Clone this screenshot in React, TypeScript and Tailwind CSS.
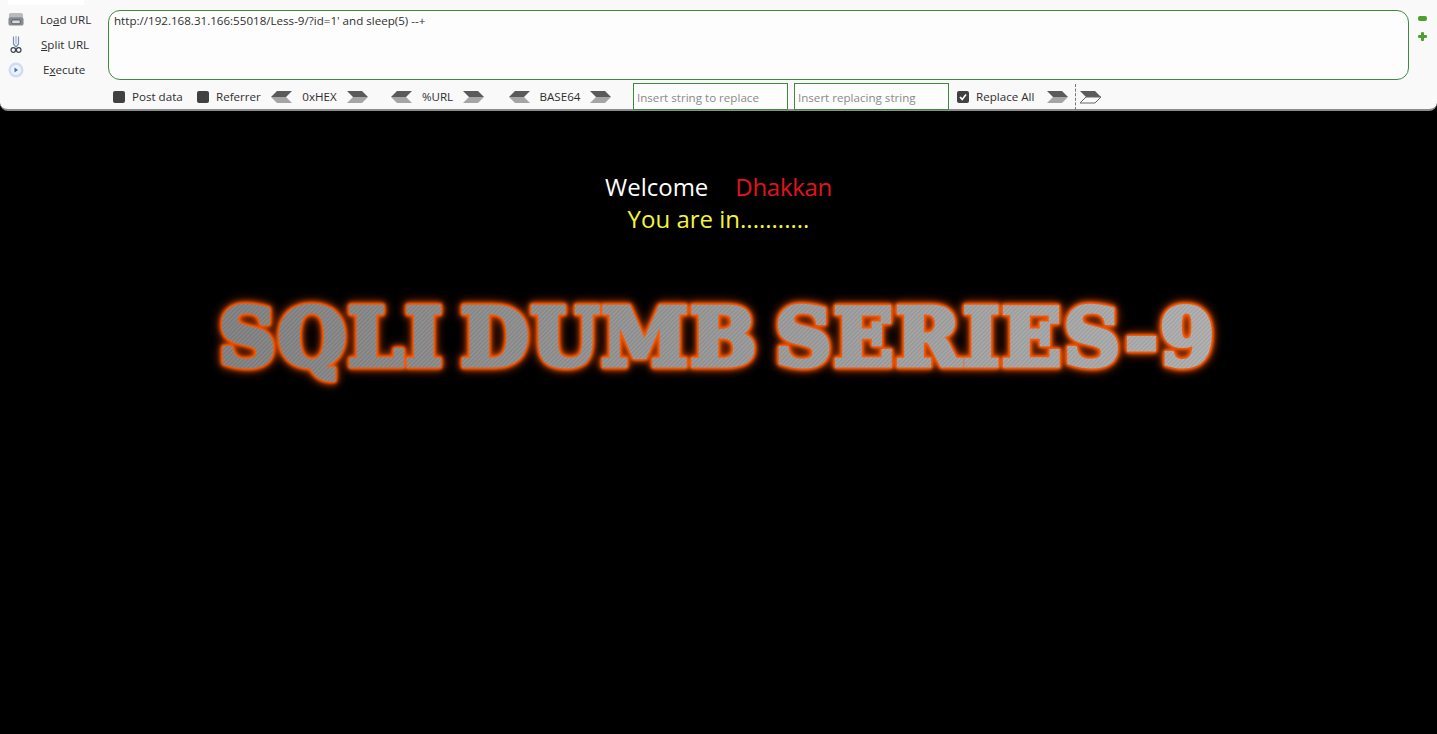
const uiFont = "font-['Open_Sans','Noto_Sans',sans-serif]";

function Chevron({ dir, hollow }: { dir: "left" | "right"; hollow?: boolean }) {
  return (
    <svg width="23" height="14" viewBox="0 0 23 14" className={dir === "left" ? "-scale-x-100" : ""}>
      <path d="M1 1h15l6 6H7z" fill={hollow ? "#5c5c5c" : "#5a5a5a"} />
      <path d="M7 7h15l-6 6H1z" fill={hollow ? "#fafafa" : "#a5a5a5"} stroke={hollow ? "#666" : "none"} />
    </svg>
  );
}

function Check({ label, on, className }: { label: string; on?: boolean; className: string }) {
  return (
    <div className={`flex items-center gap-[7px] ${className}`}>
      <span className="w-3 h-3 rounded-[2px] bg-[#414141] flex items-center justify-center">
        {on && (
          <svg width="10" height="10" viewBox="0 0 10 10" fill="none" stroke="#fff" strokeWidth="1.6">
            <path d="M2 5l2.2 2.4L8 2.6" />
          </svg>
        )}
      </span>
      <span>{label}</span>
    </div>
  );
}

function Encoder({ label, className, textWidth }: { label: string; className: string; textWidth: string }) {
  return (
    <div className={`flex items-center ${className}`}>
      <Chevron dir="left" />
      <span className={`${textWidth} text-center`}>{label}</span>
      <Chevron dir="right" />
    </div>
  );
}

function SideButton({ icon, children, pad }: { icon: React.ReactNode; children: React.ReactNode; pad: string }) {
  return (
    <div className="flex items-center h-[25px] shrink-0">
      <span className="w-4 h-5 flex items-center justify-center">{icon}</span>
      <span className={pad}>{children}</span>
    </div>
  );
}

export default function App() {
  return (
    <div className="min-h-[734px] bg-black overflow-hidden">
      {/* hackbar panel */}
      <div className={`h-[111px] bg-[#f9f9f9] rounded-b-[8px] border-b-2 border-[#8c8c8c] text-[11.6px] leading-4 text-[#2f2f2f] ${uiFont}`}>
        <div className="ml-2 w-[76px] h-[5px] bg-white" />
        <div className="flex pl-2 mt-[5px] h-[70px]">
          <div className="w-[100px] flex flex-col -mt-[3px]">
            <SideButton
              pad="ml-4"
              icon={
                <svg width="17" height="15" viewBox="0 0 17 15">
                  <rect x="1" y="0.5" width="15" height="6" rx="2" fill="#b8bcc0" />
                  <rect x="0.5" y="5" width="16" height="9" rx="2" fill="#858b90" />
                  <rect x="4" y="8" width="9" height="4" rx="1" fill="#d8dadc" stroke="#444" strokeWidth="0.8" />
                </svg>
              }
            >
              Lo<span className="underline">a</span>d URL
            </SideButton>
            <SideButton
              pad="ml-[17px]"
              icon={
                <svg width="12" height="19" viewBox="0 0 12 19" fill="none" stroke="#3c4450" strokeWidth="1.2">
                  <path d="M3.500 1.500v7.500l2.500 3M8.500 1.500v7.500l-2.500 3" stroke="#7a8fb0" />
                  <path d="M6 1v8" stroke="#9db0cc" />
                  <circle cx="3.300" cy="15" r="2.300" />
                  <circle cx="8.700" cy="15" r="2.300" />
                </svg>
              }
            >
              <span className="underline">S</span>plit URL
            </SideButton>
            <SideButton
              pad="ml-[19px]"
              icon={
                <svg width="16" height="16" viewBox="0 0 16 16">
                  <circle cx="8" cy="8" r="7.500" fill="#cfdcf2" />
                  <circle cx="8" cy="8" r="5" fill="#eef3fb" />
                  <path d="M6.500 5.500l3.500 2.500-3.500 2.500z" fill="#4d74a8" />
                </svg>
              }
            >
              E<span className="underline">x</span>ecute
            </SideButton>
          </div>
          <div className="w-[1301px] h-[70px] rounded-[12px] border border-[#3f8a3f] bg-[#fdfdfd] px-[5px] py-[2px] leading-[16px]">
            http://192.168.31.166:55018/Less-9/?id=1' and sleep(5) --+
          </div>
          <div className="ml-[9px] flex flex-col items-center gap-[11px] pt-[6px] w-[9px]">
            <span className="w-[9px] h-[5px] rounded-[2px] bg-[#4f9f2f]" />
            <svg width="9" height="9" viewBox="0 0 9 9">
              <path d="M3 0.500Q4.500-0.500 6 0.500V3h2.500Q9.500 4.500 8.500 6H6v2.500Q4.500 9.500 3 8.500V6H0.500Q-0.500 4.500 0.500 3H3z" fill="#4f9f2f" />
            </svg>
          </div>
        </div>
        <div className="flex items-center h-[27px] mt-[3px] pl-[113px]">
          <Check label="Post data" className="w-[84px]" />
          <Check label="Referrer" className="w-[73px]" />
          <Encoder label="0xHEX" textWidth="w-[53px]" className="w-[120px]" />
          <Encoder label="%URL" textWidth="w-[49px]" className="w-[118px]" />
          <Encoder label="BASE64" textWidth="w-[58px]" className="w-[125px]" />
          <div className="w-[155px] h-[27px] border border-[#3f8a3f] bg-[#fdfdfd] px-[3px] leading-[27px] text-[#8a8a8a]">
            Insert string to replace
          </div>
          <div className="ml-[6px] w-[155px] h-[27px] border border-[#3f8a3f] bg-[#fdfdfd] px-[3px] leading-[27px] text-[#8a8a8a]">
            Insert replacing string
          </div>
          <Check on label="Replace All" className="ml-[8px] w-[89px]" />
          <Chevron dir="right" />
          <span className="ml-[6px] h-[26px] border-l border-dashed border-[#777]" />
          <span className="ml-[3px] flex">
            <Chevron dir="right" hollow />
          </span>
        </div>
      </div>

      {/* page body */}
      <div className={`pt-[60px] flex flex-col items-center text-[24px] leading-[32px] ${uiFont}`}>
        <div className="flex text-white">
          <span>Welcome</span>
          <span className="ml-[27px] text-[#e0141c] tracking-[-0.3px]">Dhakkan</span>
        </div>
        <div className="text-[#f4f43c]">You are in...........</div>
        <div className="mt-[53px] h-[100px] w-full flex items-center justify-center pr-[1px]">
          <span
            className="px-3 font-['DejaVu_Serif',serif] font-bold text-[78px] leading-[100px] tracking-[2.4px] [word-spacing:-13px] whitespace-nowrap text-transparent bg-clip-text bg-[repeating-linear-gradient(135deg,rgba(255,255,255,0.08)_0px,rgba(0,0,0,0.07)_1.5px,rgba(255,255,255,0.08)_3px),linear-gradient(to_right,#808080,#b0b0b0)] [-webkit-text-stroke:5px_transparent] [filter:drop-shadow(0_0_1px_#f85c08)_drop-shadow(0_0_1px_#f85c08)_drop-shadow(0_0_1px_#f85c08)_drop-shadow(0_0_2px_#e85000)_drop-shadow(0_0_4px_#a83800)]"
          >
            SQLI DUMB SERIES-9
          </span>
        </div>
      </div>
    </div>
  );
}
